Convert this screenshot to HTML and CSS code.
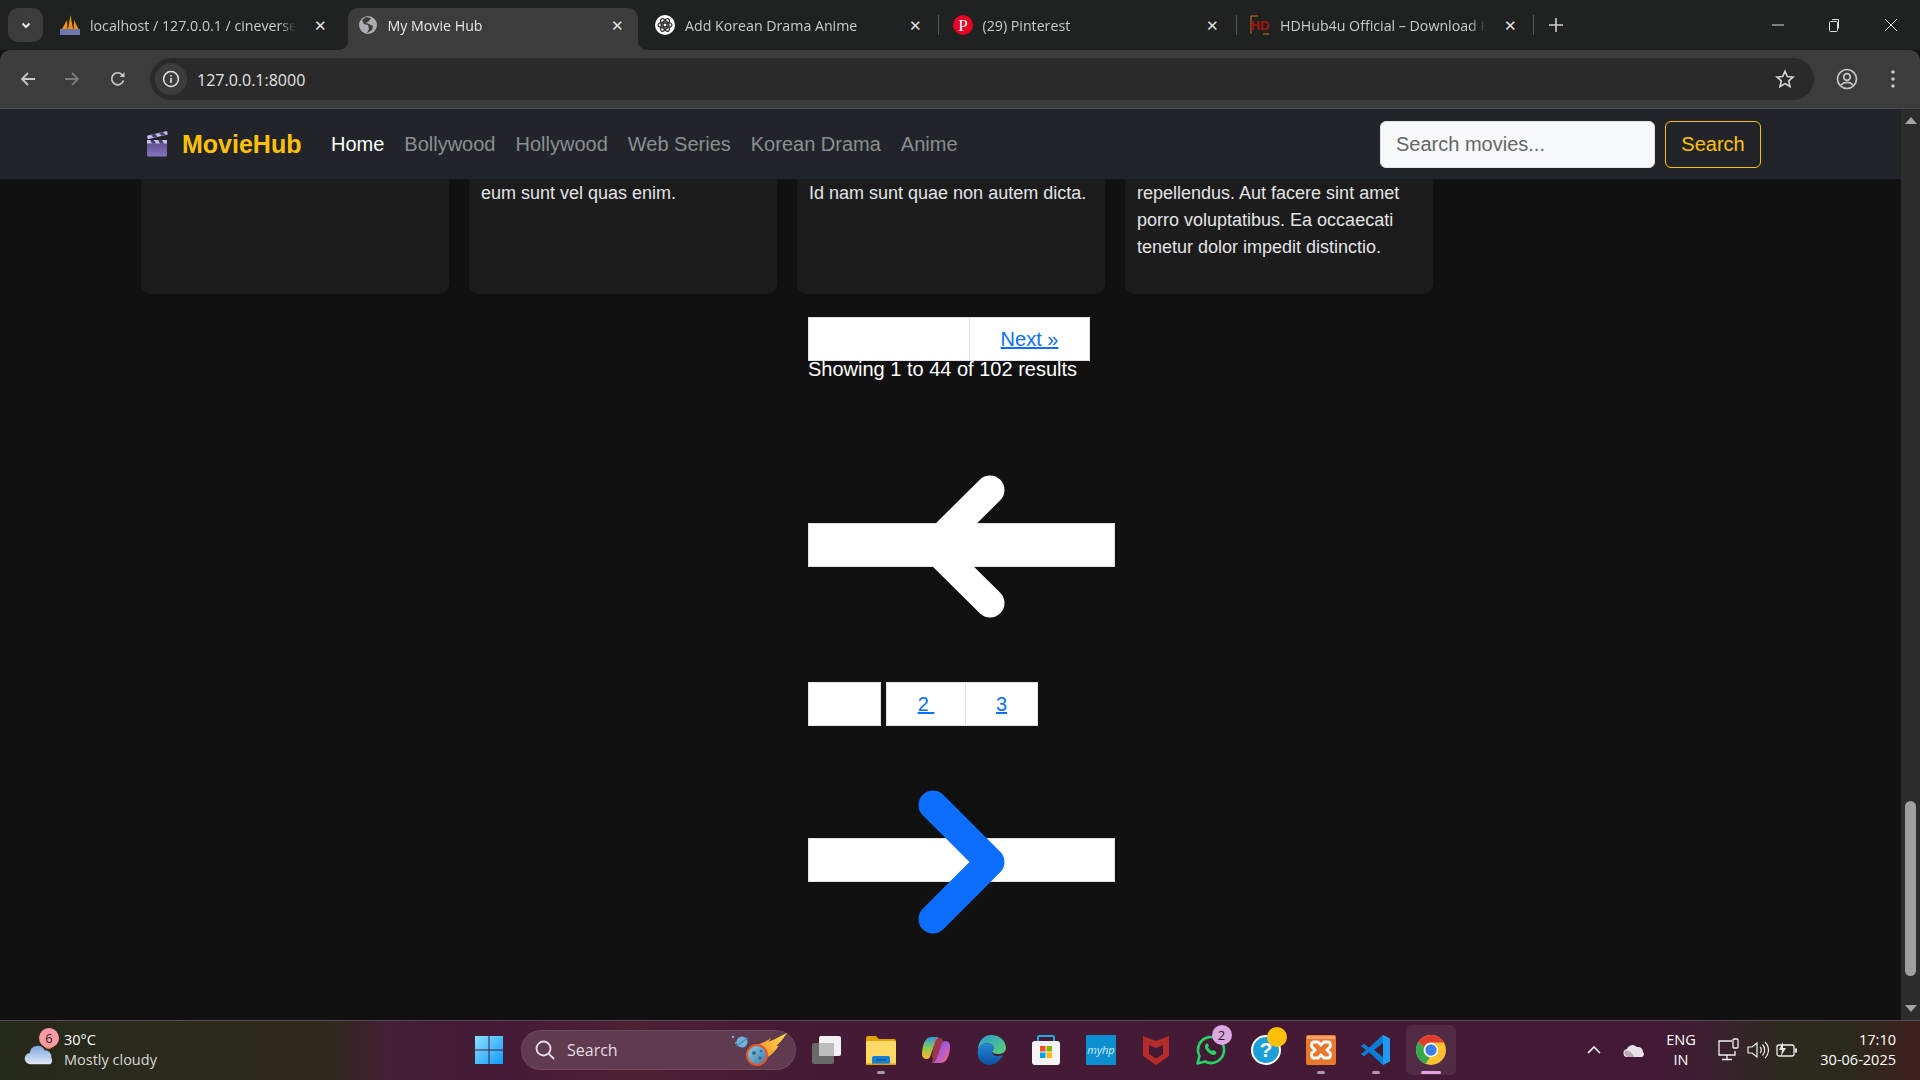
FILE: index.html
```html
<!DOCTYPE html>
<html>
<head>
    <title>My Movie Hub</title>
    <link rel="stylesheet" href="styles.css">
</head>
<body>
    <div class="tabstrip">
        <div class="tab-menu">
            <svg width="14" height="14" viewBox="0 0 14 14"><path d="M3.5 5.5 7 9l3.5-3.5" fill="none" stroke="#e8e8e8" stroke-width="2"/></svg>
        </div>
        <div class="tab">
            <svg class="favicon" viewBox="0 0 20 20"><path d="M2 14 7 5l.5 9zM8 14 10.500 0 13 14zM13.500 14 14 5l4.500 9z" fill="#f29111"/><rect x="0" y="14" width="20" height="6" fill="#6c78af"/></svg>
            <span class="tab-title">localhost / 127.0.0.1 / cineverse</span>
            <span class="tab-close">✕</span>
        </div>
        <div class="tab active">
            <svg class="favicon" viewBox="0 0 20 20"><circle cx="10" cy="10" r="9" fill="#a9adb1"/><path d="M8 2 4 5l2 4 4 1 1 4-2 4 5-3 1-4-4-2-3-1 3-2 2-3z" fill="#3c3c3c"/></svg>
            <span class="tab-title">My Movie Hub</span>
            <span class="tab-close">✕</span>
        </div>
        <div class="tab sep">
            <svg class="favicon" viewBox="0 0 20 20"><circle cx="10" cy="10" r="10" fill="#fff"/><g fill="none" stroke="#333" stroke-width="1.300"><ellipse cx="10" cy="10" rx="7" ry="3.200"/><ellipse cx="10" cy="10" rx="7" ry="3.200" transform="rotate(60 10 10)"/><ellipse cx="10" cy="10" rx="7" ry="3.200" transform="rotate(120 10 10)"/><circle cx="10" cy="10" r="2"/></g></svg>
            <span class="tab-title">Add Korean Drama Anime</span>
            <span class="tab-close">✕</span>
        </div>
        <div class="tab sep">
            <svg class="favicon" viewBox="0 0 20 20"><circle cx="10" cy="10" r="10" fill="#e60023"/><text x="10" y="15.500" text-anchor="middle" class="pin-letter">P</text></svg>
            <span class="tab-title">(29) Pinterest</span>
            <span class="tab-close">✕</span>
        </div>
        <div class="tab sep">
            <svg class="favicon" viewBox="0 0 20 20"><path d="M1 1h7M1 1v18M19 19h-6" fill="none" stroke="#c9731c" stroke-width="1"/><text x="10" y="15" text-anchor="middle" class="hd-letters">HD</text></svg>
            <span class="tab-title">HDHub4u Official – Download H</span>
            <span class="tab-close">✕</span>
        </div>
        <div class="tab-new">
            <svg width="14" height="14" viewBox="0 0 14 14"><path d="M7 0v14M0 7h14" stroke="#d0d0d0" stroke-width="1.6"/></svg>
        </div>
        <div class="win-controls">
            <div class="win-btn"><svg width="12" height="12" viewBox="0 0 12 12"><path d="M0 6h12" stroke="#ddd"/></svg></div>
            <div class="win-btn"><svg width="14" height="14" viewBox="0 0 14 14"><rect x="2.5" y="3.5" width="8" height="10" rx="1" fill="none" stroke="#ddd"/><path d="M5 1.5h6.5v9" fill="none" stroke="#ddd"/></svg></div>
            <div class="win-btn"><svg width="14" height="14" viewBox="0 0 14 14"><path d="M1 1l12 12M13 1 1 13" stroke="#ddd"/></svg></div>
        </div>
    </div>

    <div class="toolbar">
        <div class="tool-btn">
            <svg width="18" height="18" viewBox="0 0 18 18"><path d="M16 9H3M9 3 3 9l6 6" fill="none" stroke="#c4c7c5" stroke-width="1.8"/></svg>
        </div>
        <div class="tool-btn">
            <svg width="18" height="18" viewBox="0 0 18 18"><path d="M2 9h13M9 3l6 6-6 6" fill="none" stroke="#7b7d7b" stroke-width="1.8"/></svg>
        </div>
        <div class="tool-btn reload">
            <svg width="18" height="18" viewBox="0 0 18 18"><path d="M14.5 10.5A6 6 0 1 1 13 4.5L15 6.5" fill="none" stroke="#c4c7c5" stroke-width="1.7"/><path d="M15.5 2v5h-5z" fill="#c4c7c5"/></svg>
        </div>
        <div class="omnibox">
            <div class="site-info">
                <svg width="18" height="18" viewBox="0 0 18 18"><circle cx="9" cy="9" r="7.4" fill="none" stroke="#e3e3e3" stroke-width="1.5"/><path d="M9 8v5M9 5v1.6" stroke="#e3e3e3" stroke-width="1.6"/></svg>
            </div>
            <span class="url">127.0.0.1:8000</span>
            <svg class="star" width="20" height="20" viewBox="0 0 22 22"><path d="m11 2.500 2.600 5.800 6.200.6-4.700 4.200 1.400 6.200L11 16.100l-5.500 3.200 1.400-6.200-4.700-4.200 6.200-.6z" fill="none" stroke="#d5d5d5" stroke-width="1.800"/></svg>
        </div>
        <div class="tool-btn profile">
            <svg width="22" height="22" viewBox="0 0 22 22"><circle cx="11" cy="11" r="9.500" fill="none" stroke="#c4c7c5" stroke-width="1.700"/><circle cx="11" cy="9" r="3.300" fill="none" stroke="#c4c7c5" stroke-width="1.700"/><path d="M5 17c3-3.500 9-3.500 12 0" fill="none" stroke="#c4c7c5" stroke-width="1.700"/></svg>
        </div>
        <div class="tool-btn menu">
            <svg width="6" height="20" viewBox="0 0 6 20"><circle cx="3" cy="3" r="1.800" fill="#c4c7c5"/><circle cx="3" cy="10" r="1.800" fill="#c4c7c5"/><circle cx="3" cy="17" r="1.800" fill="#c4c7c5"/></svg>
        </div>
    </div>

    <div class="viewport">
        <div class="page">
            <nav class="navbar">
                <svg class="logo" width="24" height="26" viewBox="0 0 24 26">
                    <defs><linearGradient id="clap" x1="0" y1="0" x2="0" y2="1"><stop offset="0" stop-color="#5a4a86"/><stop offset="1" stop-color="#8473c0"/></linearGradient></defs>
                    <path d="M1 9h20v15a1.500 1.500 0 0 1-1.500 1.500h-17A1.500 1.500 0 0 1 1 24z" fill="url(#clap)"/>
                    <path d="M1 9h20v3.500H1z" fill="#c9bdf0"/>
                    <path d="M4 9h4l2 3.500H6zM12 9h4l2 3.500h-4z" fill="#4a3d70"/>
                    <path d="M1 4.800 21 0l.8 3.400-20 4.800z" fill="#c9bdf0"/>
                    <path d="m5 3.800 4-1 2.500 2.900-4 1zM13 1.900l4-1 2.500 2.900-4 1z" fill="#4a3d70"/>
                </svg>
                <a class="brand">MovieHub</a>
                <div class="nav-links">
                    <a class="nav-link current">Home</a>
                    <a class="nav-link">Bollywood</a>
                    <a class="nav-link">Hollywood</a>
                    <a class="nav-link">Web Series</a>
                    <a class="nav-link">Korean Drama</a>
                    <a class="nav-link">Anime</a>
                </div>
                <form class="nav-search">
                    <input class="search-input" type="text" placeholder="Search movies...">
                    <button class="search-btn" type="button">Search</button>
                </form>
            </nav>

            <div class="content">
                <div class="cards">
                    <div class="card"></div>
                    <div class="card">eum sunt vel quas enim.</div>
                    <div class="card">Id nam sunt quae non autem dicta.</div>
                    <div class="card">repellendus. Aut facere sint amet porro voluptatibus. Ea occaecati tenetur dolor impedit distinctio.</div>
                </div>

                <div class="pager">
                    <div class="pager-top">
                        <span class="page-cell prev-cell"></span>
                        <a class="page-cell next-cell" href="#">Next »</a>
                    </div>
                    <p class="results">Showing 1 to 44 of 102 results</p>

                    <div class="wide-cell first-wide">
                        <svg class="chevron" width="307" height="44" viewBox="0 0 307 44"><path d="M182 -33 125 23.500 182 80" fill="none" stroke="#fff" stroke-width="29" stroke-linecap="round" stroke-linejoin="round"/></svg>
                    </div>

                    <div class="numbers">
                        <span class="page-cell num-current"></span>
                        <a class="page-cell num-cell" href="#">2&nbsp;</a>
                        <a class="page-cell num-cell" href="#">3</a>
                    </div>

                    <div class="wide-cell last-wide">
                        <svg class="chevron" width="307" height="44" viewBox="0 0 307 44"><path d="M125 -33 182 24 125 81" fill="none" stroke="#0d6efd" stroke-width="29" stroke-linecap="round" stroke-linejoin="round"/></svg>
                    </div>
                </div>
            </div>
        </div>

        <div class="scrollbar">
            <svg class="arrow-up" width="12" height="7" viewBox="0 0 12 7"><path d="M6 0 12 7H0z" fill="#a3a3a3"/></svg>
            <div class="thumb"></div>
            <svg class="arrow-down" width="12" height="7" viewBox="0 0 12 7"><path d="M0 0h12L6 7z" fill="#a3a3a3"/></svg>
        </div>
    </div>

    <div class="taskbar">
        <div class="weather">
            <svg class="weather-icon" width="34" height="28" viewBox="0 0 34 30">
                <defs><linearGradient id="cloud" x1="0" y1="0" x2="0" y2="1"><stop offset="0" stop-color="#7fa6e0"/><stop offset="1" stop-color="#dfe8f7"/></linearGradient></defs>
                <circle cx="25" cy="7" r="5" fill="#e8791f"/>
                <path d="M6 28a6 6 0 0 1-1-12 8.500 8.500 0 0 1 16-3 7 7 0 0 1 7 8 5 5 0 0 1-1 7z" fill="url(#cloud)"/>
            </svg>
            <span class="weather-badge">6</span>
            <div class="weather-text">
                <span class="temp">30°C</span>
                <span class="sky">Mostly cloudy</span>
            </div>
        </div>

        <div class="slot">
            <svg width="30" height="30" viewBox="0 0 30 30">
                <defs><linearGradient id="win" x1="0" y1="0" x2="1" y2="1"><stop offset="0" stop-color="#8be0ff"/><stop offset="1" stop-color="#0f9bff"/></linearGradient></defs>
                <path d="M1 1h13.500v13.500H1zM15.500 1H29v13.500H15.500zM1 15.500h13.500V29H1zM15.500 15.500H29V29H15.500z" fill="url(#win)"/>
            </svg>
        </div>

        <div class="task-search">
            <svg width="22" height="22" viewBox="0 0 22 22"><circle cx="9.500" cy="9.500" r="7" fill="none" stroke="#e6dde4" stroke-width="1.800"/><path d="m14.500 14.500 5.500 5.500" stroke="#e6dde4" stroke-width="1.800"/></svg>
            <span class="task-search-label">Search</span>
            <svg class="comet" width="60" height="34" viewBox="0 0 60 34">
                <defs>
                    <linearGradient id="flame" x1="0" y1="1" x2="1" y2="0"><stop offset="0" stop-color="#f58a2a"/><stop offset="1" stop-color="#ffdf4f"/></linearGradient>
                    <linearGradient id="rock" x1="0" y1="0" x2="1" y2="1"><stop offset="0" stop-color="#8fd0ea"/><stop offset="1" stop-color="#3d78a8"/></linearGradient>
                </defs>
                <circle cx="2" cy="4" r="1.200" fill="#6fb2dc"/>
                <circle cx="5" cy="10" r="1" fill="#6fb2dc"/>
                <circle cx="11" cy="9" r="5.500" fill="#6fb0dc"/>
                <path d="M5 13 17 5" stroke="#4f88b5" stroke-width="1.300"/>
                <path d="M27 12c6-3 9-4 13-7-1 2-2 3-3 4 3-1 7-3 19-9-5 7-8 11-11 13 1 0 2 0 3-1-4 7-9 12-18 15z" fill="url(#flame)"/>
                <circle cx="26" cy="22" r="10" fill="url(#rock)" stroke="#e5572a" stroke-width="2"/>
                <circle cx="23" cy="20" r="2" fill="#3d6a92"/>
                <circle cx="29" cy="25" r="1.800" fill="#3d6a92"/>
                <circle cx="30" cy="18" r="1.300" fill="#3d6a92"/>
            </svg>
        </div>

        <div class="slot first-app">
            <svg width="30" height="30" viewBox="0 0 30 30"><rect x="1" y="8" width="22" height="21" rx="2" fill="#6a6a6a"/><rect x="8" y="1" width="22" height="20" rx="2" fill="#f1f1f1"/><rect x="8" y="8" width="15" height="13" fill="#bdbdbd"/></svg>
        </div>
        <div class="slot running">
            <svg width="30" height="30" viewBox="0 0 30 30"><path d="M0 3a2 2 0 0 1 2-2h8l3 3h15a2 2 0 0 1 2 2v4H0z" fill="#e0a30c"/><rect x="0" y="6" width="30" height="24" rx="1" fill="#ffd966"/><rect x="6" y="21" width="18" height="9" rx="2" fill="#1382d6"/><rect x="10" y="24" width="10" height="1.500" fill="#0b4f8f"/><rect x="0" y="28.500" width="30" height="1.500" fill="#d8a010"/></svg>
        </div>
        <div class="slot">
            <svg width="30" height="28" viewBox="0 0 30 28">
                <defs>
                    <linearGradient id="cop1" x1="0" y1="0" x2="0" y2="1"><stop offset="0" stop-color="#2a9be8"/><stop offset=".5" stop-color="#8cc84b"/><stop offset="1" stop-color="#ffb52e"/></linearGradient>
                    <linearGradient id="cop2" x1="0" y1="0" x2="1" y2="1"><stop offset="0" stop-color="#3158d8"/><stop offset=".5" stop-color="#b35bd6"/><stop offset="1" stop-color="#f46a6a"/></linearGradient>
                </defs>
                <path d="M10 1h8l-3 3-6 17c-1 3-8 3-8-3C1 10 4 1 10 1z" fill="url(#cop1)"/>
                <path d="M20 27h-8l3-3 6-17c1-3 8-3 8 3 0 8-3 17-9 17z" fill="url(#cop2)"/>
                <path d="M14 2h5c2 0 3 2 3 3l-6 17c-1 3-3 5-6 5 2-2 2-4 1-7z" fill="#e84f5a" opacity=".55"/>
            </svg>
        </div>
        <div class="slot">
            <svg width="30" height="30" viewBox="0 0 30 30">
                <defs>
                    <linearGradient id="edge1" x1="0" y1="0" x2="1" y2="1"><stop offset="0" stop-color="#2c9bd8"/><stop offset="1" stop-color="#5ad26c"/></linearGradient>
                    <linearGradient id="edge2" x1="0" y1="0" x2="0" y2="1"><stop offset="0" stop-color="#2389d8"/><stop offset="1" stop-color="#0d4fa0"/></linearGradient>
                </defs>
                <path d="M15 0c9 0 15 6 15 13 0 4-4 6-8 6-3 0-6-1-6-3 2-1 3-5-1-7C9 7 4 10 2 15 2 7 7 0 15 0z" fill="url(#edge1)"/>
                <path d="M2 15c2-5 7-8 13-6 4 2 3 6 1 7 0 5 5 6 11 4-3 6-8 10-14 10C6 30 0 23 2 15z" fill="url(#edge2)"/>
            </svg>
        </div>
        <div class="slot">
            <svg width="30" height="30" viewBox="0 0 30 30"><path d="M7 6V2a1 1 0 0 1 1-1h14a1 1 0 0 1 1 1v4" fill="none" stroke="#28a8e0" stroke-width="2"/><rect x="1" y="6" width="28" height="24" rx="3" fill="#f4f4f4"/><rect x="9" y="11" width="5.500" height="5.500" fill="#f25022"/><rect x="15.500" y="11" width="5.500" height="5.500" fill="#7fba00"/><rect x="9" y="17.500" width="5.500" height="5.500" fill="#00a4ef"/><rect x="15.500" y="17.500" width="5.500" height="5.500" fill="#ffb900"/></svg>
        </div>
        <div class="slot">
            <svg width="30" height="30" viewBox="0 0 30 30"><rect width="30" height="30" rx="1" fill="#0c8fd0"/><text x="15" y="19" text-anchor="middle" class="myhp-letters">myhp</text></svg>
        </div>
        <div class="slot">
            <svg width="28" height="30" viewBox="0 0 28 30"><path d="M1 1l13 5 13-5v20l-13 9-13-9z" fill="#b52c2c"/><path d="M7 10l7 3 7-3v9l-7 4.500L7 19z" fill="#431833"/></svg>
        </div>
        <div class="slot">
            <svg width="30" height="30" viewBox="0 0 30 30"><path d="M1.500 28.500 3.500 21A13 13 0 1 1 9 26.500z" fill="none" stroke="#25d366" stroke-width="2.600" stroke-linejoin="round"/><path d="M10 9c-2 2-1 5 2 8s6 4 8 2l.5-2-3-2-1.500 1c-2-1-3-2-4-4l1-1.500-2-2.500z" fill="#25d366"/></svg>
            <span class="app-badge">2</span>
        </div>
        <div class="slot">
            <svg width="30" height="30" viewBox="0 0 30 30"><circle cx="15" cy="15" r="14" fill="#1a9fd8" stroke="#fff" stroke-width="2"/><text x="15" y="22" text-anchor="middle" class="help-letter">?</text></svg>
            <span class="help-dot"></span>
        </div>
        <div class="slot running">
            <svg width="30" height="30" viewBox="0 0 30 30"><rect width="30" height="30" rx="2" fill="#e8792c"/><rect x="1" y="1" width="28" height="3" fill="#f4a36a"/><path d="M8 7h4l3 3 3-3h4c3 0 3 5 1 6l-2 2 2 2c2 1 2 6-1 6h-4l-3-3-3 3H8c-3 0-3-5-1-6l2-2-2-2c-2-1-2-6 1-6z" fill="none" stroke="#fff" stroke-width="2.800"/></svg>
        </div>
        <div class="slot running">
            <svg width="30" height="30" viewBox="0 0 30 30"><path d="M22 0 29 3.500V26.500L22 30 8 17l-5 4-3-2 7-4-7-4 3-2 5 4z" fill="#1f9cf0"/><path d="M22 0 8 13 3 9 0 11l5 4-5 4 3 2 5-4 14 13z" fill="#0a7ed6"/><path d="M22 8v14l-9-7z" fill="#431833"/></svg>
        </div>
        <div class="slot current-app">
            <svg width="30" height="30" viewBox="0 0 30 30"><circle cx="15" cy="15" r="15" fill="#fbc02d"/><path d="M15 0a15 15 0 0 1 13 7.500H15a7.500 7.500 0 0 0-7 4.800L2.500 6.800A15 15 0 0 1 15 0z" fill="#e33b2e"/><path d="M2.500 6.800 8 12.300a7.500 7.500 0 0 0 5.500 10.200L9.700 29A15 15 0 0 1 2.500 6.800z" fill="#34a853"/><circle cx="15" cy="15" r="7.200" fill="#fff"/><circle cx="15" cy="15" r="5.700" fill="#3b7dea"/></svg>
        </div>

        <div class="tray">
            <div class="tray-item">
                <svg width="14" height="8" viewBox="0 0 14 8"><path d="M1 7l6-6 6 6" fill="none" stroke="#fff" stroke-width="1.600"/></svg>
            </div>
            <div class="tray-item">
                <svg width="22" height="13" viewBox="0 0 22 13"><path d="M5 13a4 4 0 0 1-1-8 6 6 0 0 1 10-2 5 5 0 0 1 6 5 3 3 0 0 1-1 5z" fill="#e8e2e8"/><path d="M1.500 7 A5 5 0 0 0 5 13h6C10 9 6 6 1.500 7z" fill="#b9a8b8"/></svg>
            </div>
            <div class="tray-lang"><span>ENG</span><span>IN</span></div>
            <div class="tray-item net">
                <svg width="22" height="24" viewBox="0 0 22 24"><path d="M14 3H1v14h16v-4" fill="none" stroke="#f0f0f0" stroke-width="1.300"/><rect x="15" y="1" width="5" height="9" rx="1" fill="none" stroke="#f0f0f0" stroke-width="1.300"/><path d="M9 17v4M4 21.500h10" stroke="#f0f0f0" stroke-width="1.300"/></svg>
            </div>
            <div class="tray-item net">
                <svg width="22" height="20" viewBox="0 0 22 20"><path d="M1 7h4l5-4v14l-5-4H1z" fill="none" stroke="#eee" stroke-width="1.200"/><path d="M13 7a4 4 0 0 1 0 6M15.500 4.500a8 8 0 0 1 0 11M18 2a11 11 0 0 1 0 16" fill="none" stroke="#eee" stroke-width="1.200"/></svg>
            </div>
            <div class="tray-item net">
                <svg width="22" height="18" viewBox="0 0 22 18"><rect x="1" y="4" width="17" height="11" rx="2" fill="none" stroke="#eee" stroke-width="1.300"/><path d="M19 7.500h2v4h-2z" fill="#eee"/><path d="M7 1 3 9h3l-1 6 5-8H7z" fill="#eee"/></svg>
            </div>
            <div class="clock"><span>17:10</span><span>30-06-2025</span></div>
        </div>
    </div>
</body>
</html>
```

FILE: styles.css
```css
* {
    box-sizing: border-box;
}
body {
    margin: 0;
    width: 1920px;
    height: 1080px;
    overflow: hidden;
    display: flex;
    flex-direction: column;
    font-family: "Liberation Sans", Arial, sans-serif;
    background-color: #111;
}

/* browser tabs */
.tabstrip {
    height: 50px;
    display: flex;
    align-items: flex-start;
    background-color: #202221;
    font-family: "Open Sans", sans-serif;
}
.tab-menu {
    width: 35px;
    height: 34px;
    margin: 8px 7px 0 8px;
    display: flex;
    align-items: center;
    justify-content: center;
    border-radius: 10px;
    background-color: #3c3c3c;
}
.tab {
    position: relative;
    width: 290px;
    height: 42px;
    margin: 8px 7.5px 0 0;
    padding: 0 10px 8px 10px;
    display: flex;
    align-items: center;
    border-radius: 10px 10px 0 0;
    font-size: 14.2px;
    color: #c9cbca;
}
.tab.active {
    background-color: #3c3c3c;
    color: #e6e6e6;
}
.tab.active::before,
.tab.active::after {
    content: "";
    position: absolute;
    bottom: 0;
    width: 10px;
    height: 10px;
}
.tab.active::before {
    left: -10px;
    background: radial-gradient(circle at 0 0, transparent 10px, #3c3c3c 10.5px);
}
.tab.active::after {
    right: -10px;
    background: radial-gradient(circle at 100% 0, transparent 10px, #3c3c3c 10.5px);
}
.tab.sep::after {
    content: "";
    position: absolute;
    right: -4px;
    top: 7px;
    width: 1px;
    height: 20px;
    background-color: #555;
}
.favicon {
    width: 20px;
    height: 20px;
    flex: none;
}
.tab-title {
    width: 206px;
    margin-left: 10px;
    overflow: hidden;
    white-space: nowrap;
    -webkit-mask-image: linear-gradient(to right, #000 92%, transparent);
    mask-image: linear-gradient(to right, #000 92%, transparent);
}
.tab-close {
    margin-left: auto;
    width: 20px;
    text-align: center;
    font-size: 15px;
    color: #e0e0e0;
}
.pin-letter {
    font-family: "Liberation Serif", serif;
    font-size: 17px;
    fill: #fff;
}
.hd-letters {
    font-family: "Liberation Sans", sans-serif;
    font-size: 13px;
    font-weight: bold;
    fill: #a8120d;
}
.tab-new {
    width: 20px;
    height: 42px;
    margin: 8px 0 0 8px;
    display: flex;
    align-items: center;
    justify-content: center;
    padding-bottom: 8px;
}
.win-controls {
    margin-left: auto;
    display: flex;
}
.win-btn {
    width: 56px;
    height: 50px;
    display: flex;
    align-items: center;
    justify-content: center;
}
.win-btn:last-child {
    width: 58px;
}

/* address bar row */
.toolbar {
    height: 59px;
    padding-top: 8px;
    padding-left: 6px;
    display: flex;
    align-items: flex-start;
    border-radius: 10px 10px 0 0;
    border-bottom: 1px solid #4a4a4a;
    background-color: #3c3c3c;
}
.tool-btn {
    width: 44px;
    height: 42px;
    display: flex;
    align-items: center;
    justify-content: center;
}
.tool-btn.reload {
    margin-left: 2px;
}
.omnibox {
    width: 1664px;
    height: 42px;
    margin-left: 10px;
    padding-left: 5px;
    display: flex;
    align-items: center;
    border-radius: 21px;
    background-color: #2a2a2a;
    font-family: "Open Sans", sans-serif;
}
.site-info {
    width: 32px;
    height: 32px;
    display: flex;
    align-items: center;
    justify-content: center;
    border-radius: 50%;
    background-color: #3c3c3c;
}
.url {
    margin-left: 10px;
    padding-top: 1px;
    font-size: 16px;
    color: #e3e3e3;
}
.star {
    margin-left: auto;
    margin-right: 19px;
}
.tool-btn.profile {
    margin-left: 11px;
}
.tool-btn.menu {
    margin-left: 2px;
}

/* page area */
.viewport {
    flex: 1;
    min-height: 0;
    display: flex;
    border-bottom: 1px solid #5a4a58;
}
.page {
    flex: 1;
    min-width: 0;
    overflow: hidden;
}
.navbar {
    height: 70px;
    padding: 0 140px 0 146px;
    display: flex;
    align-items: center;
    background-color: #212529;
}
.logo {
    flex: none;
}
.brand {
    margin-left: 12px;
    font-size: 25px;
    font-weight: bold;
    color: #ffc107;
}
.nav-links {
    margin-left: 29.5px;
    display: flex;
    gap: 20px;
}
.nav-link {
    font-size: 20px;
    color: #8c8e90;
}
.nav-link.current {
    color: #fff;
}
.nav-search {
    margin-left: auto;
    display: flex;
    gap: 10px;
}
.search-input {
    width: 275px;
    height: 47px;
    padding: 0 15px;
    border: 1px solid #dee2e6;
    border-radius: 6px;
    background-color: #f8f9fa;
    font-family: "Liberation Sans", sans-serif;
    font-size: 20px;
}
.search-input::placeholder {
    color: #666;
    opacity: 1;
}
.search-btn {
    width: 96px;
    height: 47px;
    padding: 0;
    border: 1px solid #ffc107;
    border-radius: 6px;
    background-color: transparent;
    font-family: "Liberation Sans", sans-serif;
    font-size: 20px;
    color: #ffc107;
}

.content {
    padding-left: 141px;
}
.cards {
    display: flex;
    gap: 20px;
}
.card {
    width: 308px;
    height: 115px;
    padding: 1px 12px 0;
    border-radius: 0 0 10px 10px;
    background-color: #1c1c1c;
    font-size: 18px;
    line-height: 27px;
    color: #e2e4e6;
}

/* pagination */
.pager {
    margin-top: 23px;
    margin-left: 667px;
    font-size: 20px;
}
.pager-top,
.numbers {
    display: flex;
}
.page-cell {
    height: 44px;
    display: block;
    border: 1px solid #dee2e6;
    background-color: #fff;
    color: #0d6efd;
    line-height: 42px;
    text-align: center;
}
.prev-cell {
    width: 162px;
}
.next-cell {
    width: 121px;
    margin-left: -1px;
}
.results {
    margin: 0;
    font-size: 20px;
    line-height: 16px;
    color: #fff;
}
.wide-cell {
    position: relative;
    width: 307px;
    height: 44px;
    border: 1px solid #dee2e6;
    background-color: #fff;
}
.first-wide {
    margin-top: 146px;
}
.last-wide {
    margin-top: 112px;
}
.chevron {
    position: absolute;
    left: -1px;
    top: -1px;
    overflow: visible;
}
.numbers {
    margin-top: 115px;
}
.num-current {
    width: 73px;
    margin-right: 5px;
}
.num-cell {
    width: 80px;
}
.num-cell + .num-cell {
    width: 73px;
    margin-left: -1px;
}

/* scrollbar */
.scrollbar {
    position: relative;
    width: 19px;
    background-color: #2c2c2c;
}
.arrow-up {
    position: absolute;
    top: 8px;
    left: 4px;
}
.arrow-down {
    position: absolute;
    bottom: 8px;
    left: 4px;
}
.thumb {
    position: absolute;
    top: 692px;
    left: 4px;
    width: 11px;
    height: 175px;
    border-radius: 6px;
    background-color: #9f9f9f;
}

/* windows taskbar */
.taskbar {
    height: 59px;
    padding-bottom: 1px;
    flex: none;
    display: flex;
    align-items: center;
    background: linear-gradient(to right, #262a1a 0, #2a2a1b 9%, #2e2a1b 17%, #432035 20%, #451a36 26%, #4e2132 33%, #441a35 42%, #431935 86%, #3d2030 89%, #2b2a1e 93%, #2a2a1c 96%, #3e1f20 100%);
    font-family: "Open Sans", sans-serif;
    color: #fff;
}
.weather {
    position: relative;
    width: 461.5px;
    height: 100%;
    padding-left: 24px;
    display: flex;
    align-items: center;
    flex: none;
}
.weather-icon {
    margin-top: 4px;
    flex: none;
}
.weather-badge {
    position: absolute;
    left: 39px;
    top: 7px;
    width: 20px;
    height: 20px;
    border-radius: 50%;
    background-color: #ff9aa5;
    color: #222;
    font-size: 13px;
    line-height: 20px;
    text-align: center;
}
.weather-text {
    margin-left: 6px;
    display: flex;
    flex-direction: column;
    font-size: 14.5px;
    line-height: 20px;
}
.sky {
    color: #dcd8d8;
}
.slot {
    position: relative;
    width: 55px;
    height: 50px;
    flex: none;
    display: flex;
    align-items: center;
    justify-content: center;
}
.slot.first-app {
    margin-left: 2.5px;
}
.slot.running::after,
.slot.current-app::after {
    content: "";
    position: absolute;
    bottom: 1px;
    left: 50%;
    width: 8px;
    height: 3px;
    margin-left: -4px;
    border-radius: 2px;
    background-color: #a89aa6;
}
.slot.current-app {
    width: 50px;
    margin-left: 2.5px;
    border-radius: 6px;
    background-color: rgba(255, 255, 255, 0.08);
}
.slot.current-app::after {
    width: 20px;
    margin-left: -10px;
    background-color: #dfa3e6;
}
.task-search {
    width: 275px;
    height: 40px;
    margin-left: 4.5px;
    padding-left: 12px;
    display: flex;
    align-items: center;
    flex: none;
    position: relative;
    border-radius: 20px;
    border: 1px solid rgba(255, 255, 255, 0.08);
    background-color: #603a4e;
}
.task-search-label {
    margin-left: 11px;
    font-size: 16px;
    color: #e6dde4;
}
.comet {
    position: absolute;
    right: 4px;
    top: 2px;
}
.myhp-letters {
    font-family: "Open Sans", sans-serif;
    font-size: 11px;
    font-style: italic;
    fill: #d5ecf8;
}
.help-letter {
    font-family: "Liberation Sans", sans-serif;
    font-size: 21px;
    font-weight: bold;
    fill: #fff;
}
.app-badge {
    position: absolute;
    right: 7px;
    top: 0;
    width: 20px;
    height: 20px;
    border-radius: 50%;
    background-color: #dba8e2;
    color: #222;
    font-size: 13px;
    line-height: 20px;
    text-align: center;
}
.help-dot {
    position: absolute;
    right: 7px;
    top: 2px;
    width: 20px;
    height: 20px;
    border-radius: 50%;
    background-color: #ffc107;
}
.tray {
    margin-left: auto;
    display: flex;
    align-items: center;
    padding-right: 24px;
}
.tray-item {
    width: 40px;
    display: flex;
    align-items: center;
    justify-content: center;
}
.tray-item.net {
    width: 29px;
}
.tray-lang {
    width: 40px;
    margin: 0 13px 0 7px;
    display: flex;
    flex-direction: column;
    align-items: center;
    font-size: 14.5px;
    line-height: 20px;
}
.clock {
    width: 95px;
    display: flex;
    flex-direction: column;
    align-items: flex-end;
    font-size: 14.5px;
    line-height: 20px;
}
```
